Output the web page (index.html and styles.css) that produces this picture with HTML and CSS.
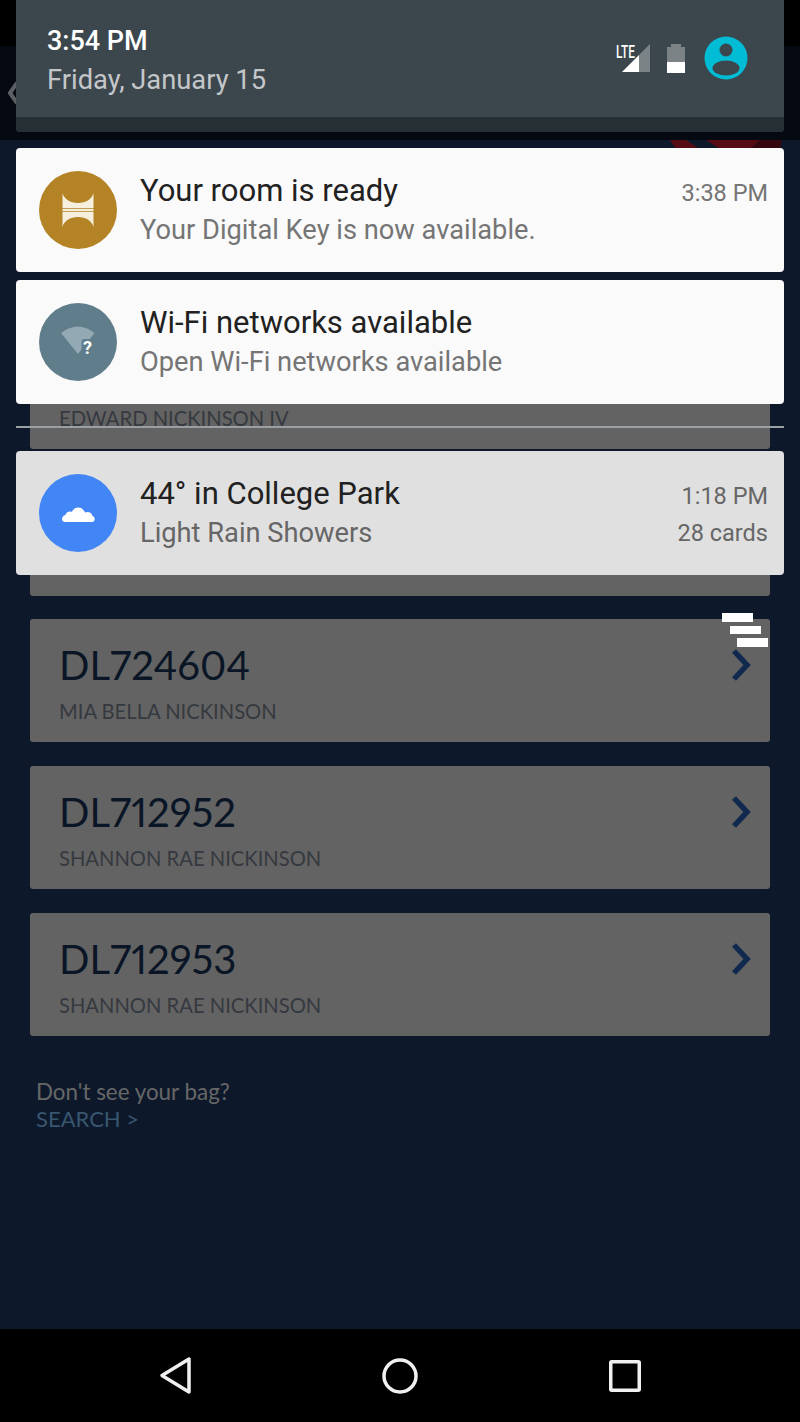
FILE: index.html
```html
<!DOCTYPE html>
<html lang="en">
<head>
    <meta charset="UTF-8">
    <meta name="viewport" content="width=device-width, initial-scale=1.0">
    <title>Notifications</title>
    <link rel="stylesheet" href="styles.css">
</head>
<body>
    <div class="phone">
        <div class="app">
            <div class="status-strip"></div>
            <div class="app-bar">
                <svg class="back-chevron" width="10" height="24" viewBox="0 0 10 24"><path d="M9 2 L2 12 L9 22" fill="none" stroke="#5c5f63" stroke-width="4"/></svg>
            </div>
            <svg class="logo-peek" width="128" height="9" viewBox="0 0 128 9">
                <path d="M10 0 H26 L40 9 H16 Z M46 0 H100 L90 9 H60 Z" fill="#560a14"/>
                <path d="M100 0 H122 L120 9 H90 Z" fill="#36060e"/>
            </svg>

            <div class="bag-list">
                <div class="bag-card">
                    <div>
                        <div class="bag-number">&nbsp;</div>
                        <div class="bag-name">EDWARD NICKINSON IV</div>
                    </div>
                </div>
                <div class="bag-card">
                    <div>
                        <div class="bag-number">&nbsp;</div>
                        <div class="bag-name">&nbsp;</div>
                    </div>
                </div>
                <div class="bag-card">
                    <div>
                        <div class="bag-number">DL724604</div>
                        <div class="bag-name">MIA BELLA NICKINSON</div>
                    </div>
                    <svg class="bag-chevron" width="20" height="32" viewBox="0 0 20 32"><path d="M3 2 L16 16 L3 30" fill="none" stroke="#12294f" stroke-width="5.500"/></svg>
                </div>
                <div class="bag-card">
                    <div>
                        <div class="bag-number">DL712952</div>
                        <div class="bag-name">SHANNON RAE NICKINSON</div>
                    </div>
                    <svg class="bag-chevron" width="20" height="32" viewBox="0 0 20 32"><path d="M3 2 L16 16 L3 30" fill="none" stroke="#12294f" stroke-width="5.500"/></svg>
                </div>
                <div class="bag-card">
                    <div>
                        <div class="bag-number">DL712953</div>
                        <div class="bag-name">SHANNON RAE NICKINSON</div>
                    </div>
                    <svg class="bag-chevron" width="20" height="32" viewBox="0 0 20 32"><path d="M3 2 L16 16 L3 30" fill="none" stroke="#12294f" stroke-width="5.500"/></svg>
                </div>
            </div>

            <div class="search-hint">
                <div class="hint-text">Don't see your bag?</div>
                <div class="hint-link">SEARCH &gt;</div>
            </div>
        </div>

        <div class="nav-bar">
            <svg width="32" height="40" viewBox="0 0 32 40"><path d="M3 19.500 L30 3 V36 Z" fill="none" stroke="#f0f0f0" stroke-width="3.500" stroke-linejoin="round"/></svg>
            <svg width="36" height="36" viewBox="0 0 36 36"><circle cx="18" cy="18" r="16" fill="none" stroke="#f0f0f0" stroke-width="3.500"/></svg>
            <svg width="32" height="32" viewBox="0 0 32 32"><rect x="1.750" y="1.750" width="28.500" height="28.500" rx="1" fill="none" stroke="#f0f0f0" stroke-width="3.500"/></svg>
        </div>

        <!-- notification shade, sits over the app -->
        <div class="shade">
            <div class="shade-header">
                <div class="shade-top">
                    <div class="clock">
                        <div class="clock-time">3:54 PM</div>
                        <div class="clock-date">Friday, January 15</div>
                    </div>
                    <div class="status-icons">
                        <div class="signal">
                            <span class="lte">LTE</span>
                            <svg width="28" height="28" viewBox="0 0 28 28">
                                <path d="M17 11 L28 0 V28 H17 Z" fill="#7c8386"/>
                                <path d="M0 28 L17 11 V28 Z" fill="#fff"/>
                            </svg>
                        </div>
                        <svg width="20" height="29" viewBox="0 0 20 29">
                            <path d="M5 0 H15 V3 H19 V18 H1 V3 H5 Z" fill="#7c8386"/>
                            <rect x="1" y="18" width="18" height="11" fill="#fff"/>
                        </svg>
                        <svg class="avatar" width="44" height="44" viewBox="0 0 44 44">
                            <circle cx="22" cy="22" r="21.500" fill="#00bcd4"/>
                            <circle cx="22" cy="14" r="6.500" fill="#3c464d"/>
                            <ellipse cx="22" cy="32" rx="13.500" ry="7.500" fill="#3c464d"/>
                        </svg>
                    </div>
                </div>
                <div class="shade-lip"></div>
            </div>

            <div class="notif">
                <svg class="notif-icon" width="78" height="78" viewBox="0 0 78 78">
                    <circle cx="39" cy="39" r="39" fill="#b38325"/>
                    <path d="M23.500 22 C25 28 31 32 39 32 C47 32 53 28 54.500 22 V37.300 H23.500 Z M23.500 38.100 H54.500 V39.900 H23.500 Z M23.500 40.700 H54.500 V56 C53 50 47 46 39 46 C31 46 25 50 23.500 56 Z" fill="#f6efdd"/>
                </svg>
                <div class="notif-body">
                    <div class="notif-title">Your room is ready</div>
                    <div class="notif-text">Your Digital Key is now available.</div>
                </div>
                <div class="notif-meta">3:38 PM</div>
            </div>

            <div class="notif">
                <svg class="notif-icon" width="78" height="78" viewBox="0 0 78 78">
                    <circle cx="39" cy="39" r="39" fill="#607d8b"/>
                    <path d="M22 30 Q39 17 55.500 30 L39 51 Z" fill="#93a9b3"/>
                    <rect x="42.500" y="36" width="14" height="18" rx="3" fill="#607d8b"/>
                    <text class="wifi-mark" x="48.500" y="51">?</text>
                </svg>
                <div class="notif-body">
                    <div class="notif-title">Wi-Fi networks available</div>
                    <div class="notif-text">Open Wi-Fi networks available</div>
                </div>
            </div>

            <div class="shade-divider"></div>

            <div class="notif notif-old">
                <svg class="notif-icon" width="78" height="78" viewBox="0 0 78 78">
                    <circle cx="39" cy="39" r="39" fill="#4285f4"/>
                    <path d="M26 48 C22 48 22 42 26.500 41 C27.500 37.500 31 37 33 38 C35 32 43.500 32 46 38.500 C49 37 53 38.500 53.500 42 C56.500 42.500 56.500 48 53 48 Z" fill="#fff"/>
                </svg>
                <div class="notif-body">
                    <div class="notif-title">44° in College Park</div>
                    <div class="notif-text">Light Rain Showers</div>
                </div>
                <div class="notif-meta">
                    <div>1:18 PM</div>
                    <div class="notif-count">28 cards</div>
                </div>
            </div>

            <div class="more-stack">
                <span></span>
                <span></span>
                <span></span>
            </div>
        </div>
    </div>
</body>
</html>
```

FILE: styles.css
```css
body {
    margin: 0;
    background-color: #000;
    font-family: Roboto, sans-serif;
}

.phone {
    position: relative;
    width: 800px;
    height: 1422px;
    display: flex;
    flex-direction: column;
    overflow: hidden;
}

.app {
    position: relative;
    flex: 1;
    background-color: #0d192b;
    font-family: Lato, sans-serif;
    font-variant-numeric: proportional-nums;
}

.status-strip {
    height: 46px;
    background-color: #000;
}

.app-bar {
    position: relative;
    height: 94px;
    background-color: #050a12;
}

.back-chevron {
    position: absolute;
    left: 8px;
    top: 35px;
}

.logo-peek {
    position: absolute;
    left: 660px;
    top: 140px;
}

.bag-list {
    display: flex;
    flex-direction: column;
    gap: 23.5px;
    padding: 185.5px 30px 0;
}

.bag-card {
    height: 123.3px;
    box-sizing: border-box;
    padding: 21px 19px 0 29px;
    display: flex;
    justify-content: space-between;
    background-color: #636363;
    border-radius: 3px;
}

.bag-number {
    font-size: 40px;
    line-height: 50px;
    color: #0a1526;
}

.bag-name {
    margin-top: 8px;
    font-size: 20.200px;
    line-height: 26px;
    color: #35393f;
}

.bag-chevron {
    margin-top: 9px;
}

.search-hint {
    padding: 42px 36px 0;
    font-size: 22px;
    line-height: 27px;
}

.hint-text {
    font-size: 22.400px;
    color: #676767;
}

.hint-link {
    color: #38566f;
}

.nav-bar {
    height: 93px;
    flex-shrink: 0;
    box-sizing: border-box;
    padding: 0 159px;
    display: flex;
    justify-content: space-between;
    align-items: center;
    background-color: #000;
}

/* shade */

.shade {
    position: absolute;
    top: 0;
    left: 16px;
    width: 768px;
}

.shade-header {
    margin-bottom: 16px;
    background-color: #3c464d;
    border-radius: 0 0 4px 4px;
    overflow: hidden;
}

.shade-top {
    height: 117px;
    box-sizing: border-box;
    padding: 25px 36px 0 31px;
    display: flex;
    justify-content: space-between;
}

.clock-time {
    font-size: 27px;
    font-weight: 500;
    line-height: 32px;
    color: #fff;
}

.clock-date {
    margin-top: 7px;
    font-size: 27.300px;
    line-height: 32px;
    color: #c4c7c9;
}

.status-icons {
    display: flex;
    align-items: flex-start;
    gap: 16px;
    padding-top: 19px;
}

.signal {
    position: relative;
    width: 34px;
    height: 28px;
    display: flex;
    justify-content: flex-end;
}

.lte {
    position: absolute;
    left: 0;
    top: -2px;
    font-size: 18px;
    font-weight: 500;
    line-height: 20px;
    color: #fff;
    transform: scaleX(0.66);
    transform-origin: left center;
}

.avatar {
    margin: -8px 0 0 2px;
}

.shade-lip {
    height: 15px;
    background-color: #262f33;
}

.notif {
    height: 124px;
    box-sizing: border-box;
    margin-bottom: 8px;
    padding: 0 16px 0 23px;
    display: flex;
    align-items: center;
    background-color: #fafafa;
    border-radius: 4px;
}

.notif-old {
    margin-bottom: 0;
    background-color: #e0e0e0;
}

.notif-icon {
    flex-shrink: 0;
    margin-right: 23px;
}

.wifi-mark {
    font-family: Roboto, sans-serif;
    font-size: 18px;
    font-weight: 700;
    text-anchor: middle;
    fill: #fff;
}

.notif-body {
    flex: 1;
}

.notif-title {
    font-size: 31px;
    line-height: 36px;
    color: #212121;
}

.notif-text {
    margin-top: 3px;
    font-size: 27.250px;
    line-height: 36px;
    color: #757575;
}

.notif-old .notif-text,
.notif-old .notif-meta {
    color: #666;
}

.notif-meta {
    align-self: flex-start;
    margin-top: 30px;
    font-size: 23.500px;
    line-height: 30px;
    text-align: right;
    color: #757575;
}

.notif-count {
    margin-top: 7px;
}

.shade-divider {
    height: 2px;
    margin: 22px 0 23px;
    background-color: #9a9fa3;
}

.more-stack {
    position: absolute;
    left: 706px;
    top: 613px;
    width: 46px;
    display: flex;
    flex-direction: column;
    gap: 4px;
}

.more-stack span {
    width: 31px;
    height: 8.500px;
    background-color: #fff;
}

.more-stack span:nth-child(2) {
    margin-left: 7.500px;
}

.more-stack span:nth-child(3) {
    margin-left: 15px;
}
```
